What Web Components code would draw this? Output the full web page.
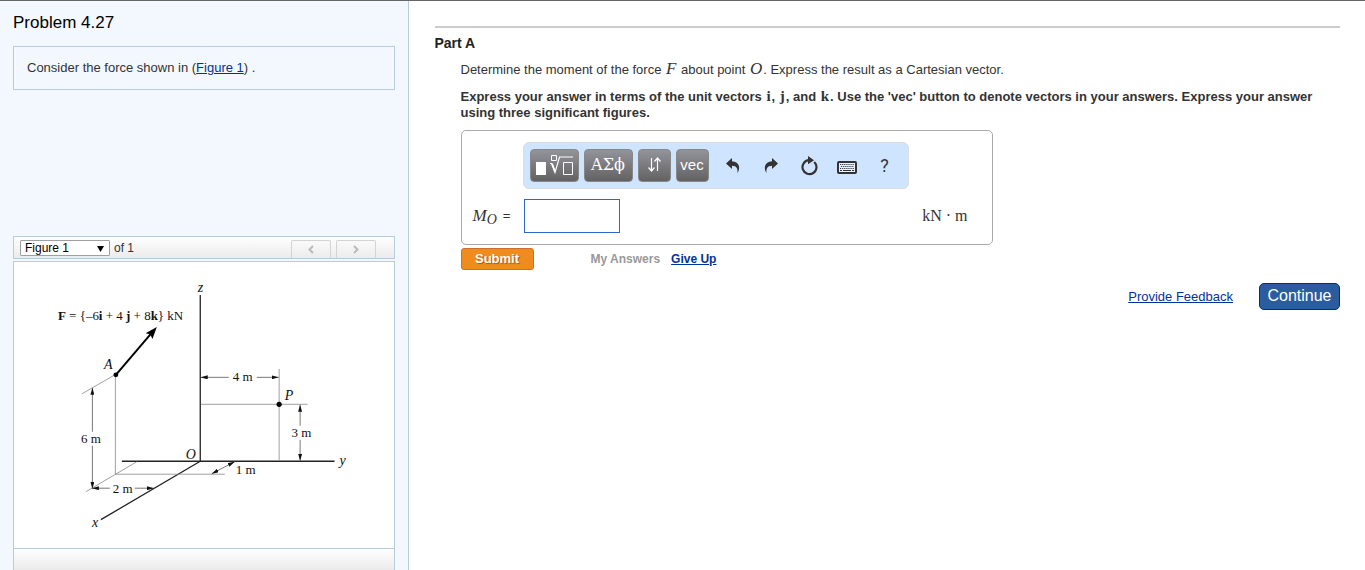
<!DOCTYPE html>
<html lang="en">
<head>
    <meta charset="UTF-8">
    <meta name="viewport" content="width=device-width, initial-scale=1.0">
    <title>Problem 4.27</title>
    <style>
        body {
            margin: 0;
            font-family: "Liberation Sans", Arial, sans-serif;
            font-size: 13px;
            line-height: 16px;
            color: #333;
            background: #fff;
        }
        a {
            color: #039;
        }
        var, .unit {
            margin: 0 1px;
            font-family: "Liberation Serif", "Times New Roman", serif;
            font-size: 17px;
            line-height: 1px;
        }
        b.unit {
            font-size: 15px;
        }
    </style>
</head>
<body>

    <problem-page>
        <problem-intro slot="side" heading="Problem 4.27">
            Consider the force shown in (<a href="#figure">Figure 1</a>) .
        </problem-intro>
        <figure-viewer slot="side" id="figure" count="1">
            <force-diagram></force-diagram>
        </figure-viewer>

        <problem-part heading="Part A">
            <span slot="question">Determine the moment of the force <var>F</var> about point <var>O</var>. Express the result as a Cartesian vector.</span>
            <span slot="instructions">Express your answer in terms of the unit vectors <b class="unit">i</b>, <b class="unit">j</b>, and <b class="unit">k</b>. Use the 'vec' button to denote vectors in your answers. Express your answer using three significant figures.</span>
            <answer-box>
                <math-toolbar slot="toolbar"></math-toolbar>
                <span slot="unit">kN · m</span>
            </answer-box>
        </problem-part>
        <page-footer></page-footer>
    </problem-page>

    <script>

        // Shared base: puts the markup from render() into an open shadow root
        class BaseElement extends HTMLElement {
            constructor() {
                super();
                const template = document.createElement('template');
                template.innerHTML = this.render();
                this.attachShadow({ mode: 'open' });
                this.shadowRoot.appendChild(template.content.cloneNode(true));
            }
        }

        class ProblemPage extends BaseElement {
            render() {
                return `
                <style>
                    :host {
                        display: grid;
                        grid-template-columns: calc(30% - 1px) 1fr;
                        min-height: 100vh;
                        box-sizing: border-box;
                        border-top: 1px solid #666;
                    }
                    aside {
                        display: flex;
                        flex-direction: column;
                        justify-content: space-between;
                        gap: 20px;
                        padding: 12px 13px 0;
                        background: #f3f8ff;
                        border-right: 1px solid #b8cbdd;
                    }
                    main {
                        padding: 25px 25px 0 26px;
                    }
                </style>
                <aside><slot name="side"></slot></aside>
                <main><slot></slot></main>
                `;
            }
        }

        class ProblemIntro extends BaseElement {
            render() {
                return `
                <style>
                    :host {
                        display: block;
                    }
                    h1 {
                        margin: 0 0 13px;
                        font-size: 17px;
                        font-weight: normal;
                        line-height: 20px;
                        color: #000;
                    }
                    .text {
                        padding: 13px;
                        border: 1px solid #b8cbdd;
                    }
                </style>
                <h1></h1>
                <div class="text"><slot></slot></div>
                `;
            }

            connectedCallback() {
                this.shadowRoot.querySelector('h1').textContent = this.getAttribute('heading');
            }
        }

        class FigureViewer extends BaseElement {
            render() {
                return `
                <style>
                    :host {
                        display: block;
                    }
                    .bar {
                        display: flex;
                        align-items: flex-start;
                        gap: 4px;
                        height: 18px;
                        padding: 3px 18px 0 6px;
                        border: 1px solid #b8cbdd;
                        background: linear-gradient(#fff, #ebebeb);
                        font-size: 12px;
                    }
                    .pick {
                        display: grid;
                        align-items: center;
                        width: 90px;
                    }
                    .pick > * {
                        grid-area: 1 / 1;
                    }
                    select {
                        appearance: none;
                        box-sizing: border-box;
                        height: 16px;
                        padding: 0 4px;
                        border: 1px solid #a0a0a0;
                        border-radius: 1px;
                        background: #fff;
                        color: #000;
                        font: inherit;
                        line-height: 14px;
                    }
                    .pick svg {
                        justify-self: end;
                        margin-right: 6px;
                        pointer-events: none;
                    }
                    nav {
                        display: flex;
                        gap: 5px;
                        margin-left: auto;
                    }
                    nav button {
                        display: grid;
                        place-items: center;
                        width: 40px;
                        height: 18px;
                        padding: 0;
                        border: 1px solid #d3d3d3;
                        border-bottom: 0;
                        border-radius: 2px 2px 0 0;
                        background: linear-gradient(#fafafa, #ececec);
                    }
                    .stage {
                        margin-top: 2px;
                        border: 1px solid #b8cbdd;
                        background: #fff;
                    }
                    .foot {
                        height: 21px;
                        border: solid #b8cbdd;
                        border-width: 0 1px;
                        background: linear-gradient(#fff, #ebebeb);
                    }
                </style>
                <div class="bar">
                    <div class="pick">
                        <select aria-label="Figure"><option>Figure 1</option></select>
                        <svg width="7" height="7"><path d="M0 1h7L3.500 7z" fill="#000"/></svg>
                    </div>
                    <span>of <span class="count"></span></span>
                    <nav>
                        <button aria-label="Previous figure" disabled>
                            <svg width="8" height="9"><path d="M6 1 2.500 4.500 6 8" fill="none" stroke="#bbb" stroke-width="2"/></svg>
                        </button>
                        <button aria-label="Next figure" disabled>
                            <svg width="8" height="9"><path d="M2 1 5.500 4.500 2 8" fill="none" stroke="#bbb" stroke-width="2"/></svg>
                        </button>
                    </nav>
                </div>
                <div class="stage"><slot></slot></div>
                <div class="foot"></div>
                `;
            }

            connectedCallback() {
                this.shadowRoot.querySelector('.count').textContent = this.getAttribute('count');
            }
        }

        class ForceDiagram extends BaseElement {
            render() {
                return `
                <style>
                    :host {
                        display: block;
                    }
                    svg {
                        display: block;
                        width: 100%;
                        max-width: 380px;
                        height: auto;
                    }
                    text {
                        font-family: "Liberation Serif", "Times New Roman", serif;
                        font-size: 13px;
                        fill: #111;
                    }
                    .name {
                        font-style: italic;
                        font-size: 14px;
                    }
                    .axis {
                        stroke: #222;
                        stroke-width: 1.3;
                    }
                    .thin {
                        stroke: #888;
                        stroke-width: 0.8;
                    }
                    .dim {
                        stroke: #555;
                        stroke-width: 0.8;
                    }
                    .force {
                        stroke: #000;
                        stroke-width: 2;
                    }
                </style>
                <svg viewBox="0 0 380 286" role="img" aria-label="Force F at A and point P">
                    <defs>
                        <marker id="tip" viewBox="0 0 7 4" refX="7" refY="2" markerWidth="7" markerHeight="4" markerUnits="userSpaceOnUse" orient="auto-start-reverse">
                            <path d="M0 0 7 2 0 4z" fill="#111"/>
                        </marker>
                        <marker id="big" viewBox="0 0 12 9" refX="12" refY="4.500" markerWidth="12" markerHeight="9" markerUnits="userSpaceOnUse" orient="auto">
                            <path d="M0 0 12 4.500 0 9 2 4.500z"/>
                        </marker>
                    </defs>
                    <g fill="none">
                        <path class="axis" d="M186.500 33V199.500M108 199.500H321M186.500 199.500 87 258"/>
                        <path class="thin" d="M101.500 113V212.500H211M123 200 72 230M68 132 101 113M265.500 107V199M187 142.500H294"/>
                        <path class="dim" marker-end="url(#tip)" d="M78.500 170V126"/>
                        <path class="dim" marker-end="url(#tip)" d="M78.500 184V227"/>
                        <path class="dim" marker-end="url(#tip)" d="M96 226.500H78"/>
                        <path class="dim" marker-end="url(#tip)" d="M121 226.500H140"/>
                        <path class="dim" marker-end="url(#tip)" d="M215 115.500H187"/>
                        <path class="dim" marker-end="url(#tip)" d="M243 115.500H265"/>
                        <path class="dim" marker-end="url(#tip)" d="M286.500 164V143"/>
                        <path class="dim" marker-end="url(#tip)" d="M286.500 178V199"/>
                        <path class="dim" marker-start="url(#tip)" marker-end="url(#tip)" d="M198 212 221 200"/>
                        <path class="force" d="M102 113 137 72"/>
                        <path marker-end="url(#big)" d="M102 113 143 65"/>
                    </g>
                    <circle cx="102" cy="113" r="2.400"/>
                    <circle cx="265.500" cy="142.500" r="2.600"/>
                    <text x="44" y="58"><tspan font-weight="bold">F</tspan> = {–6<tspan font-weight="bold">i</tspan> + 4 <tspan font-weight="bold">j</tspan> + 8<tspan font-weight="bold">k</tspan>} kN</text>
                    <text class="name" x="184" y="30">z</text>
                    <text class="name" x="90" y="107">A</text>
                    <text class="name" x="271" y="138">P</text>
                    <text class="name" x="172" y="197">O</text>
                    <text class="name" x="326" y="203">y</text>
                    <text class="name" x="78" y="265">x</text>
                    <text x="67" y="181">6 m</text>
                    <text x="99" y="231">2 m</text>
                    <text x="219" y="119">4 m</text>
                    <text x="278" y="175">3 m</text>
                    <text x="222" y="212">1 m</text>
                </svg>
                `;
            }
        }

        class ProblemPart extends BaseElement {
            render() {
                return `
                <style>
                    :host {
                        display: block;
                        border-top: 2px solid #ccc;
                    }
                    h2 {
                        margin: 7px 0 11px;
                        font-size: 14px;
                        line-height: 16px;
                        color: #222;
                    }
                    .body {
                        padding-left: 26px;
                    }
                    p {
                        margin: 0 0 11px;
                    }
                    .instructions {
                        margin-bottom: 9px;
                        font-weight: bold;
                    }
                    .actions {
                        display: flex;
                        align-items: center;
                        margin-top: 3px;
                        font-size: 12px;
                        font-weight: bold;
                    }
                    button {
                        width: 73px;
                        height: 22px;
                        padding: 0 0 2px;
                        border: 1px solid #c9702a;
                        border-radius: 3px;
                        background: #f08c1e;
                        color: #fff;
                        font: bold 13px "Liberation Sans", Arial, sans-serif;
                        text-shadow: 1px 1px 1px #a65a10;
                    }
                    .mine {
                        margin: 0 11px 0 57px;
                        color: #999;
                    }
                    a {
                        color: #039;
                    }
                </style>
                <h2></h2>
                <div class="body">
                    <p><slot name="question"></slot></p>
                    <p class="instructions"><slot name="instructions"></slot></p>
                    <slot></slot>
                    <div class="actions">
                        <button type="button">Submit</button>
                        <span class="mine">My Answers</span>
                        <a href="#give-up">Give Up</a>
                    </div>
                </div>
                `;
            }

            connectedCallback() {
                this.shadowRoot.querySelector('h2').textContent = this.getAttribute('heading');
            }
        }

        class AnswerBox extends BaseElement {
            render() {
                return `
                <style>
                    :host {
                        display: grid;
                        grid-template-columns: 50px 1fr auto;
                        row-gap: 10px;
                        align-items: center;
                        box-sizing: border-box;
                        max-width: 532px;
                        padding: 11px 24px 11px 11px;
                        border: 1px solid #aaa;
                        border-radius: 5px;
                    }
                    .tools {
                        grid-column: 2 / -1;
                        justify-self: start;
                    }
                    label {
                        display: flex;
                        align-items: center;
                        gap: 6px;
                    }
                    var, .unit {
                        font-family: "Liberation Serif", "Times New Roman", serif;
                        font-size: 16px;
                    }
                    var {
                        font-size: 17px;
                    }
                    var sub {
                        font-size: 14px;
                        line-height: 1px;
                        vertical-align: -3px;
                    }
                    input {
                        box-sizing: border-box;
                        width: 96px;
                        height: 34px;
                        margin: 0 0 0 1px;
                        padding: 4px;
                        border: 1px solid #36c;
                        background: #fff;
                        font: inherit;
                    }
                </style>
                <div class="tools"><slot name="toolbar"></slot></div>
                <label for="answer"><var>M<sub>O</sub></var> =</label>
                <input id="answer" type="text">
                <span class="unit"><slot name="unit"></slot></span>
                `;
            }
        }

        class MathToolbar extends BaseElement {
            render() {
                return `
                <style>
                    :host {
                        display: flex;
                        gap: 5px;
                        padding: 6px 4px 6px 6px;
                        border: 1px solid #ddd;
                        border-radius: 6px;
                        background: #cfe5ff;
                    }
                    .plain {
                        display: flex;
                    }
                </style>
                <tool-button wide>
                    <svg width="40" height="24" fill="none" stroke="#fff">
                        <path d="M2 10h10v13H2z" fill="#fff" stroke="none"/>
                        <path d="M17.500 3.500h5v5h-5zM29.500 10.500h9v12h-9z"/>
                        <path d="M16 11.500h2l3 9 4.500-15.500H39" stroke-width="1.200"/>
                        <path d="m18 12 3 7.500" stroke-width="2"/>
                    </svg>
                </tool-button>
                <tool-button wide serif>ΑΣϕ</tool-button>
                <tool-button>
                    <svg width="14" height="16" fill="none" stroke="#fff" stroke-width="1.200">
                        <path d="M4.500 2v13M1.500 11.500l3 3.500 3-3.500M10.500 15V2M7.500 5.500l3-3.500 3 3.500"/>
                    </svg>
                </tool-button>
                <tool-button>vec</tool-button>
                <div class="plain">
                    <tool-button plain label="Undo">
                        <svg width="16" height="16"><path d="M1 5.500 7 0v3.200c7 .5 9 6 5.500 12 .5-5-1-7.200-5.500-7.400V11z" fill="#333"/></svg>
                    </tool-button>
                    <tool-button plain label="Redo">
                        <svg width="16" height="16"><path d="M15 5.500 9 0v3.200c-7 .5-9 6-5.500 12-.5-5 1-7.200 5.500-7.400V11z" fill="#333"/></svg>
                    </tool-button>
                    <tool-button plain label="Reset">
                        <svg width="18" height="20"><path d="M14.200 6A7 7 0 1 1 9 4.200" fill="none" stroke="#333" stroke-width="2.200"/><path d="m8 0 6 4.200L8 8.200z" fill="#333"/></svg>
                    </tool-button>
                    <tool-button plain label="Keyboard">
                        <svg width="20" height="18" fill="none" stroke="#333">
                            <rect x="1" y="5" width="18" height="11" rx="1" fill="#e8f2ff" stroke-width="2"/>
                            <path d="M3 7.500h14M4 9.500h13M3 11.500h14" stroke-dasharray="1.200 0.900"/>
                            <path d="M3 13.500h2M6 13.500h8M15 13.500h2"/>
                        </svg>
                    </tool-button>
                    <tool-button plain label="Help">?</tool-button>
                </div>
                `;
            }
        }

        class ToolButton extends BaseElement {
            render() {
                return `
                <style>
                    :host {
                        display: block;
                    }
                    button {
                        display: grid;
                        place-items: center;
                        width: 33px;
                        height: 33px;
                        padding: 0 0 3px;
                        border: 1px solid #888;
                        border-radius: 4px;
                        background: linear-gradient(#93939b, #626262);
                        color: #fff;
                        font: 15px "Liberation Sans", Arial, sans-serif;
                        white-space: nowrap;
                    }
                    :host([wide]) button {
                        width: 49px;
                    }
                    :host([serif]) button {
                        font: 16px "DejaVu Serif", serif;
                    }
                    :host([plain]) button {
                        width: 38px;
                        padding: 0;
                        border: 0;
                        background: none;
                        color: #333;
                        font: 18px Roboto, sans-serif;
                    }
                </style>
                <button type="button"><slot></slot></button>
                `;
            }

            connectedCallback() {
                if (this.hasAttribute('label')) {
                    this.shadowRoot.querySelector('button').setAttribute('aria-label', this.getAttribute('label'));
                }
            }
        }

        class PageFooter extends BaseElement {
            render() {
                return `
                <style>
                    :host {
                        display: flex;
                        justify-content: flex-end;
                        align-items: center;
                        gap: 26px;
                        margin-top: 13px;
                    }
                    a {
                        color: #039;
                    }
                    button {
                        width: 81px;
                        height: 27px;
                        padding: 0 0 2px;
                        border: 1px solid #036;
                        border-radius: 5px;
                        background: #2b5c9d;
                        color: #fff;
                        font: 16px "Liberation Sans", Arial, sans-serif;
                    }
                </style>
                <a href="#feedback">Provide Feedback</a>
                <button type="button">Continue</button>
                `;
            }
        }

        window.customElements.define('problem-page', ProblemPage);
        window.customElements.define('problem-intro', ProblemIntro);
        window.customElements.define('figure-viewer', FigureViewer);
        window.customElements.define('force-diagram', ForceDiagram);
        window.customElements.define('problem-part', ProblemPart);
        window.customElements.define('answer-box', AnswerBox);
        window.customElements.define('math-toolbar', MathToolbar);
        window.customElements.define('tool-button', ToolButton);
        window.customElements.define('page-footer', PageFooter);

    </script>

</body>
</html>
